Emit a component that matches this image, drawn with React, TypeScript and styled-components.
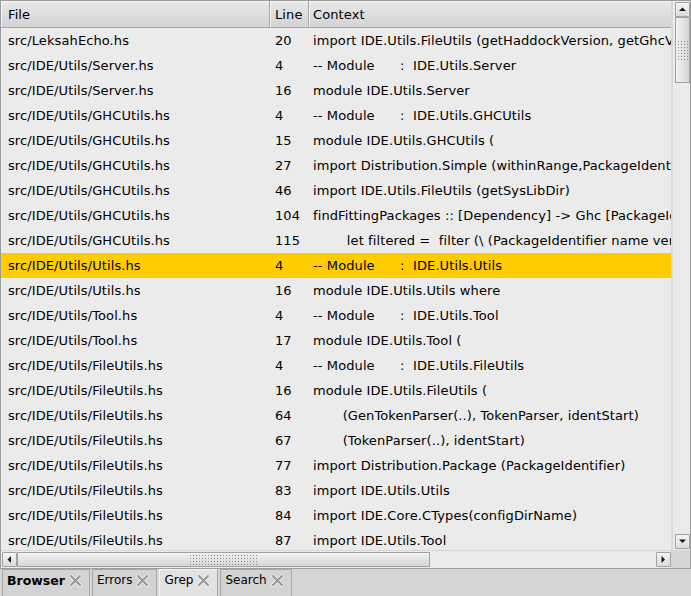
import React, { FC } from "react";
import styled, { createGlobalStyle } from "styled-components";

type Match = {
  file: string;
  line: number;
  context: string;
};

const MATCHES: Match[] = [
  { file: "src/LeksahEcho.hs", line: 20, context: "import IDE.Utils.FileUtils (getHaddockVersion, getGhcVersion)" },
  { file: "src/IDE/Utils/Server.hs", line: 4, context: "-- Module      :  IDE.Utils.Server" },
  { file: "src/IDE/Utils/Server.hs", line: 16, context: "module IDE.Utils.Server" },
  { file: "src/IDE/Utils/GHCUtils.hs", line: 4, context: "-- Module      :  IDE.Utils.GHCUtils" },
  { file: "src/IDE/Utils/GHCUtils.hs", line: 15, context: "module IDE.Utils.GHCUtils (" },
  { file: "src/IDE/Utils/GHCUtils.hs", line: 27, context: "import Distribution.Simple (withinRange,PackageIdentifier(..),Dependency(..))" },
  { file: "src/IDE/Utils/GHCUtils.hs", line: 46, context: "import IDE.Utils.FileUtils (getSysLibDir)" },
  { file: "src/IDE/Utils/GHCUtils.hs", line: 104, context: "findFittingPackages :: [Dependency] -> Ghc [PackageIdentifier]" },
  { file: "src/IDE/Utils/GHCUtils.hs", line: 115, context: "        let filtered =  filter (\\ (PackageIdentifier name version) ->" },
  { file: "src/IDE/Utils/Utils.hs", line: 4, context: "-- Module      :  IDE.Utils.Utils" },
  { file: "src/IDE/Utils/Utils.hs", line: 16, context: "module IDE.Utils.Utils where" },
  { file: "src/IDE/Utils/Tool.hs", line: 4, context: "-- Module      :  IDE.Utils.Tool" },
  { file: "src/IDE/Utils/Tool.hs", line: 17, context: "module IDE.Utils.Tool (" },
  { file: "src/IDE/Utils/FileUtils.hs", line: 4, context: "-- Module      :  IDE.Utils.FileUtils" },
  { file: "src/IDE/Utils/FileUtils.hs", line: 16, context: "module IDE.Utils.FileUtils (" },
  { file: "src/IDE/Utils/FileUtils.hs", line: 64, context: "       (GenTokenParser(..), TokenParser, identStart)" },
  { file: "src/IDE/Utils/FileUtils.hs", line: 67, context: "       (TokenParser(..), identStart)" },
  { file: "src/IDE/Utils/FileUtils.hs", line: 77, context: "import Distribution.Package (PackageIdentifier)" },
  { file: "src/IDE/Utils/FileUtils.hs", line: 83, context: "import IDE.Utils.Utils" },
  { file: "src/IDE/Utils/FileUtils.hs", line: 84, context: "import IDE.Core.CTypes(configDirName)" },
  { file: "src/IDE/Utils/FileUtils.hs", line: 87, context: "import IDE.Utils.Tool" },
];

const SELECTED = 9;

const TABS = [
  { label: "Browser", bold: true, active: false },
  { label: "Errors", bold: false, active: false },
  { label: "Grep", bold: false, active: true },
  { label: "Search", bold: false, active: false },
];

const GlobalStyle = createGlobalStyle`
  html, body {
    margin: 0;
    padding: 0;
    background: #d6d6d6;
  }
  body {
    font-family: "DejaVu Sans", "Liberation Sans", sans-serif;
    font-size: 13px;
    letter-spacing: 0.1px;
    color: #000;
  }
`;

const Arrow: FC<{ dir: "up" | "down" | "left" | "right" }> = ({ dir }) => {
  const points = {
    up: "0,4 7,4 3.5,0.5",
    down: "0,0.5 7,0.5 3.5,4",
    left: "4,0 4,7 0.5,3.5",
    right: "0.5,0 0.5,7 4,3.5",
  }[dir];
  const vertical = dir === "up" || dir === "down";
  return (
    <svg width={vertical ? 7 : 5} height={vertical ? 5 : 7} viewBox={vertical ? "0 0 7 5" : "0 0 5 7"}>
      <polygon points={points} fill="#1a1a1a" />
    </svg>
  );
};

const CloseIcon: FC = () => (
  <svg width="15" height="15" viewBox="0 0 15 15">
    <path d="M3 3 L12 12 M12 3 L3 12" stroke="#f4f4f4" strokeWidth="3.6" strokeLinecap="round" />
    <path d="M3 3 L12 12 M12 3 L3 12" stroke="#9a9a9a" strokeWidth="2.2" strokeLinecap="round" />
  </svg>
);

const App: FC = () => {
  return (
    <>
      <GlobalStyle />
      <Window>
        <Frame>
          <Viewport>
            <HeaderRow>
              <HeaderCell $pad={7}>File</HeaderCell>
              <HeaderCell $pad={5}>Line</HeaderCell>
              <HeaderCell $pad={4} $last>
                Context
              </HeaderCell>
            </HeaderRow>
            {MATCHES.map((m, i) => (
              <Row key={i} $selected={i === SELECTED}>
                <Cell $pad={7}>{m.file}</Cell>
                <Cell $pad={5}>{m.line}</Cell>
                <Cell $pad={4}>{m.context}</Cell>
              </Row>
            ))}
          </Viewport>
          <VScroll>
            <ScrollButton>
              <Arrow dir="up" />
            </ScrollButton>
            <VTrack>
              <VThumb>
                <Grip $cols={4} $rows={7} />
              </VThumb>
            </VTrack>
            <ScrollButton>
              <Arrow dir="down" />
            </ScrollButton>
          </VScroll>
          <HScroll>
            <ScrollButton>
              <Arrow dir="left" />
            </ScrollButton>
            <HTrack>
              <HThumb>
                <Grip $cols={23} $rows={4} />
              </HThumb>
            </HTrack>
            <ScrollButton>
              <Arrow dir="right" />
            </ScrollButton>
          </HScroll>
          <Corner />
        </Frame>
        <TabBar>
          {TABS.map((t) => (
            <Tab key={t.label} $active={t.active}>
              <TabLabel $bold={t.bold}>{t.label}</TabLabel>
              <CloseIcon />
            </Tab>
          ))}
        </TabBar>
      </Window>
    </>
  );
};

export default App;

const Window = styled.div`
  width: 691px;
  height: 596px;
  display: flex;
  flex-direction: column;
  overflow: hidden;
  background: #d6d6d6;
`;

const Frame = styled.div`
  height: 569px;
  flex: none;
  box-sizing: border-box;
  border: 1px solid #9c9c9c;
  display: grid;
  grid-template-columns: 1fr 19px;
  grid-template-rows: 1fr 18px;
  background: #ebebeb;
`;

const Viewport = styled.div`
  overflow: hidden;
  min-width: 0;
  background: #ebebeb;
`;

const COLUMNS = "269px 39px 1fr";

const HeaderRow = styled.div`
  display: grid;
  grid-template-columns: ${COLUMNS};
  height: 27px;
  box-sizing: border-box;
  border-bottom: 1px solid #a4a4a4;
  background: linear-gradient(#e9e9e9, #d3d3d3);
`;

const HeaderCell = styled.div<{ $pad: number; $last?: boolean }>`
  display: flex;
  align-items: center;
  padding-left: ${(p) => p.$pad}px;
  border-right: ${(p) => (p.$last ? "none" : "1px solid #a8a8a8")};
  box-shadow: inset 1px 1px 0 #f4f4f4;
  white-space: nowrap;
  overflow: hidden;
`;

const Row = styled.div<{ $selected: boolean }>`
  display: grid;
  grid-template-columns: ${COLUMNS};
  height: 25px;
  background: ${(p) => (p.$selected ? "#ffcc00" : "transparent")};
`;

const Cell = styled.div<{ $pad: number }>`
  display: flex;
  align-items: center;
  padding-left: ${(p) => p.$pad}px;
  white-space: pre;
  overflow: hidden;
`;

const VScroll = styled.div`
  display: flex;
  flex-direction: column;
  align-items: center;
  padding: 1px 0 1px 2px;
  box-sizing: border-box;
  border-left: 2px solid #d8d8d8;
  background: #ebebeb;
`;

const HScroll = styled.div`
  display: flex;
  align-items: center;
  padding: 0 0 0 1px;
  border-top: 1px solid #d8d8d8;
  background: #ebebeb;
`;

const Corner = styled.div`
  background: #d6d6d6;
`;

const ScrollButton = styled.div`
  width: 15px;
  height: 15px;
  box-sizing: border-box;
  flex: none;
  display: flex;
  align-items: center;
  justify-content: center;
  border: 1px solid #a2a2a2;
  border-radius: 1px;
  background: linear-gradient(#f4f4f4, #dcdcdc);
`;

const VTrack = styled.div`
  flex: 1;
  width: 15px;
  display: flex;
  flex-direction: column;
`;

const HTrack = styled.div`
  flex: 1;
  height: 15px;
  display: flex;
`;

const VThumb = styled.div`
  height: 66px;
  box-sizing: border-box;
  border: 1px solid #a2a2a2;
  background: linear-gradient(90deg, #f2f2f2, #d6d6d6);
  display: flex;
  align-items: center;
  justify-content: center;
`;

const HThumb = styled.div`
  width: 413px;
  box-sizing: border-box;
  border: 1px solid #a2a2a2;
  background: linear-gradient(#f2f2f2, #d6d6d6);
  display: flex;
  align-items: center;
  justify-content: center;
`;

const Grip = styled.div<{ $cols: number; $rows: number }>`
  width: ${(p) => p.$cols * 3}px;
  height: ${(p) => p.$rows * 3}px;
  background-image: radial-gradient(circle, #8c8c8c 0.9px, transparent 1px);
  background-size: 3px 3px;
`;

const TabBar = styled.div`
  flex: 1;
  display: flex;
  align-items: flex-end;
  gap: 2px;
  padding-left: 2px;
  background: #d6d6d6;
`;

const Tab = styled.div<{ $active: boolean }>`
  height: 27px;
  box-sizing: border-box;
  display: flex;
  align-items: flex-start;
  gap: 3px;
  padding: 3px 6px 0 4px;
  border: 1px solid #a8a8a8;
  border-bottom: none;
  border-left-color: ${(p) => (p.$active ? "#f6f6f6" : "#a8a8a8")};
  border-top-color: ${(p) => (p.$active ? "#f6f6f6" : "#a8a8a8")};
  background: ${(p) => (p.$active ? "#e2e2e2" : "#d3d3d3")};
`;

const TabLabel = styled.span<{ $bold: boolean }>`
  font-size: ${(p) => (p.$bold ? 12.5 : 12)}px;
  letter-spacing: 0;
  line-height: 15px;
  font-weight: ${(p) => (p.$bold ? 700 : 400)};
  white-space: nowrap;
`;
